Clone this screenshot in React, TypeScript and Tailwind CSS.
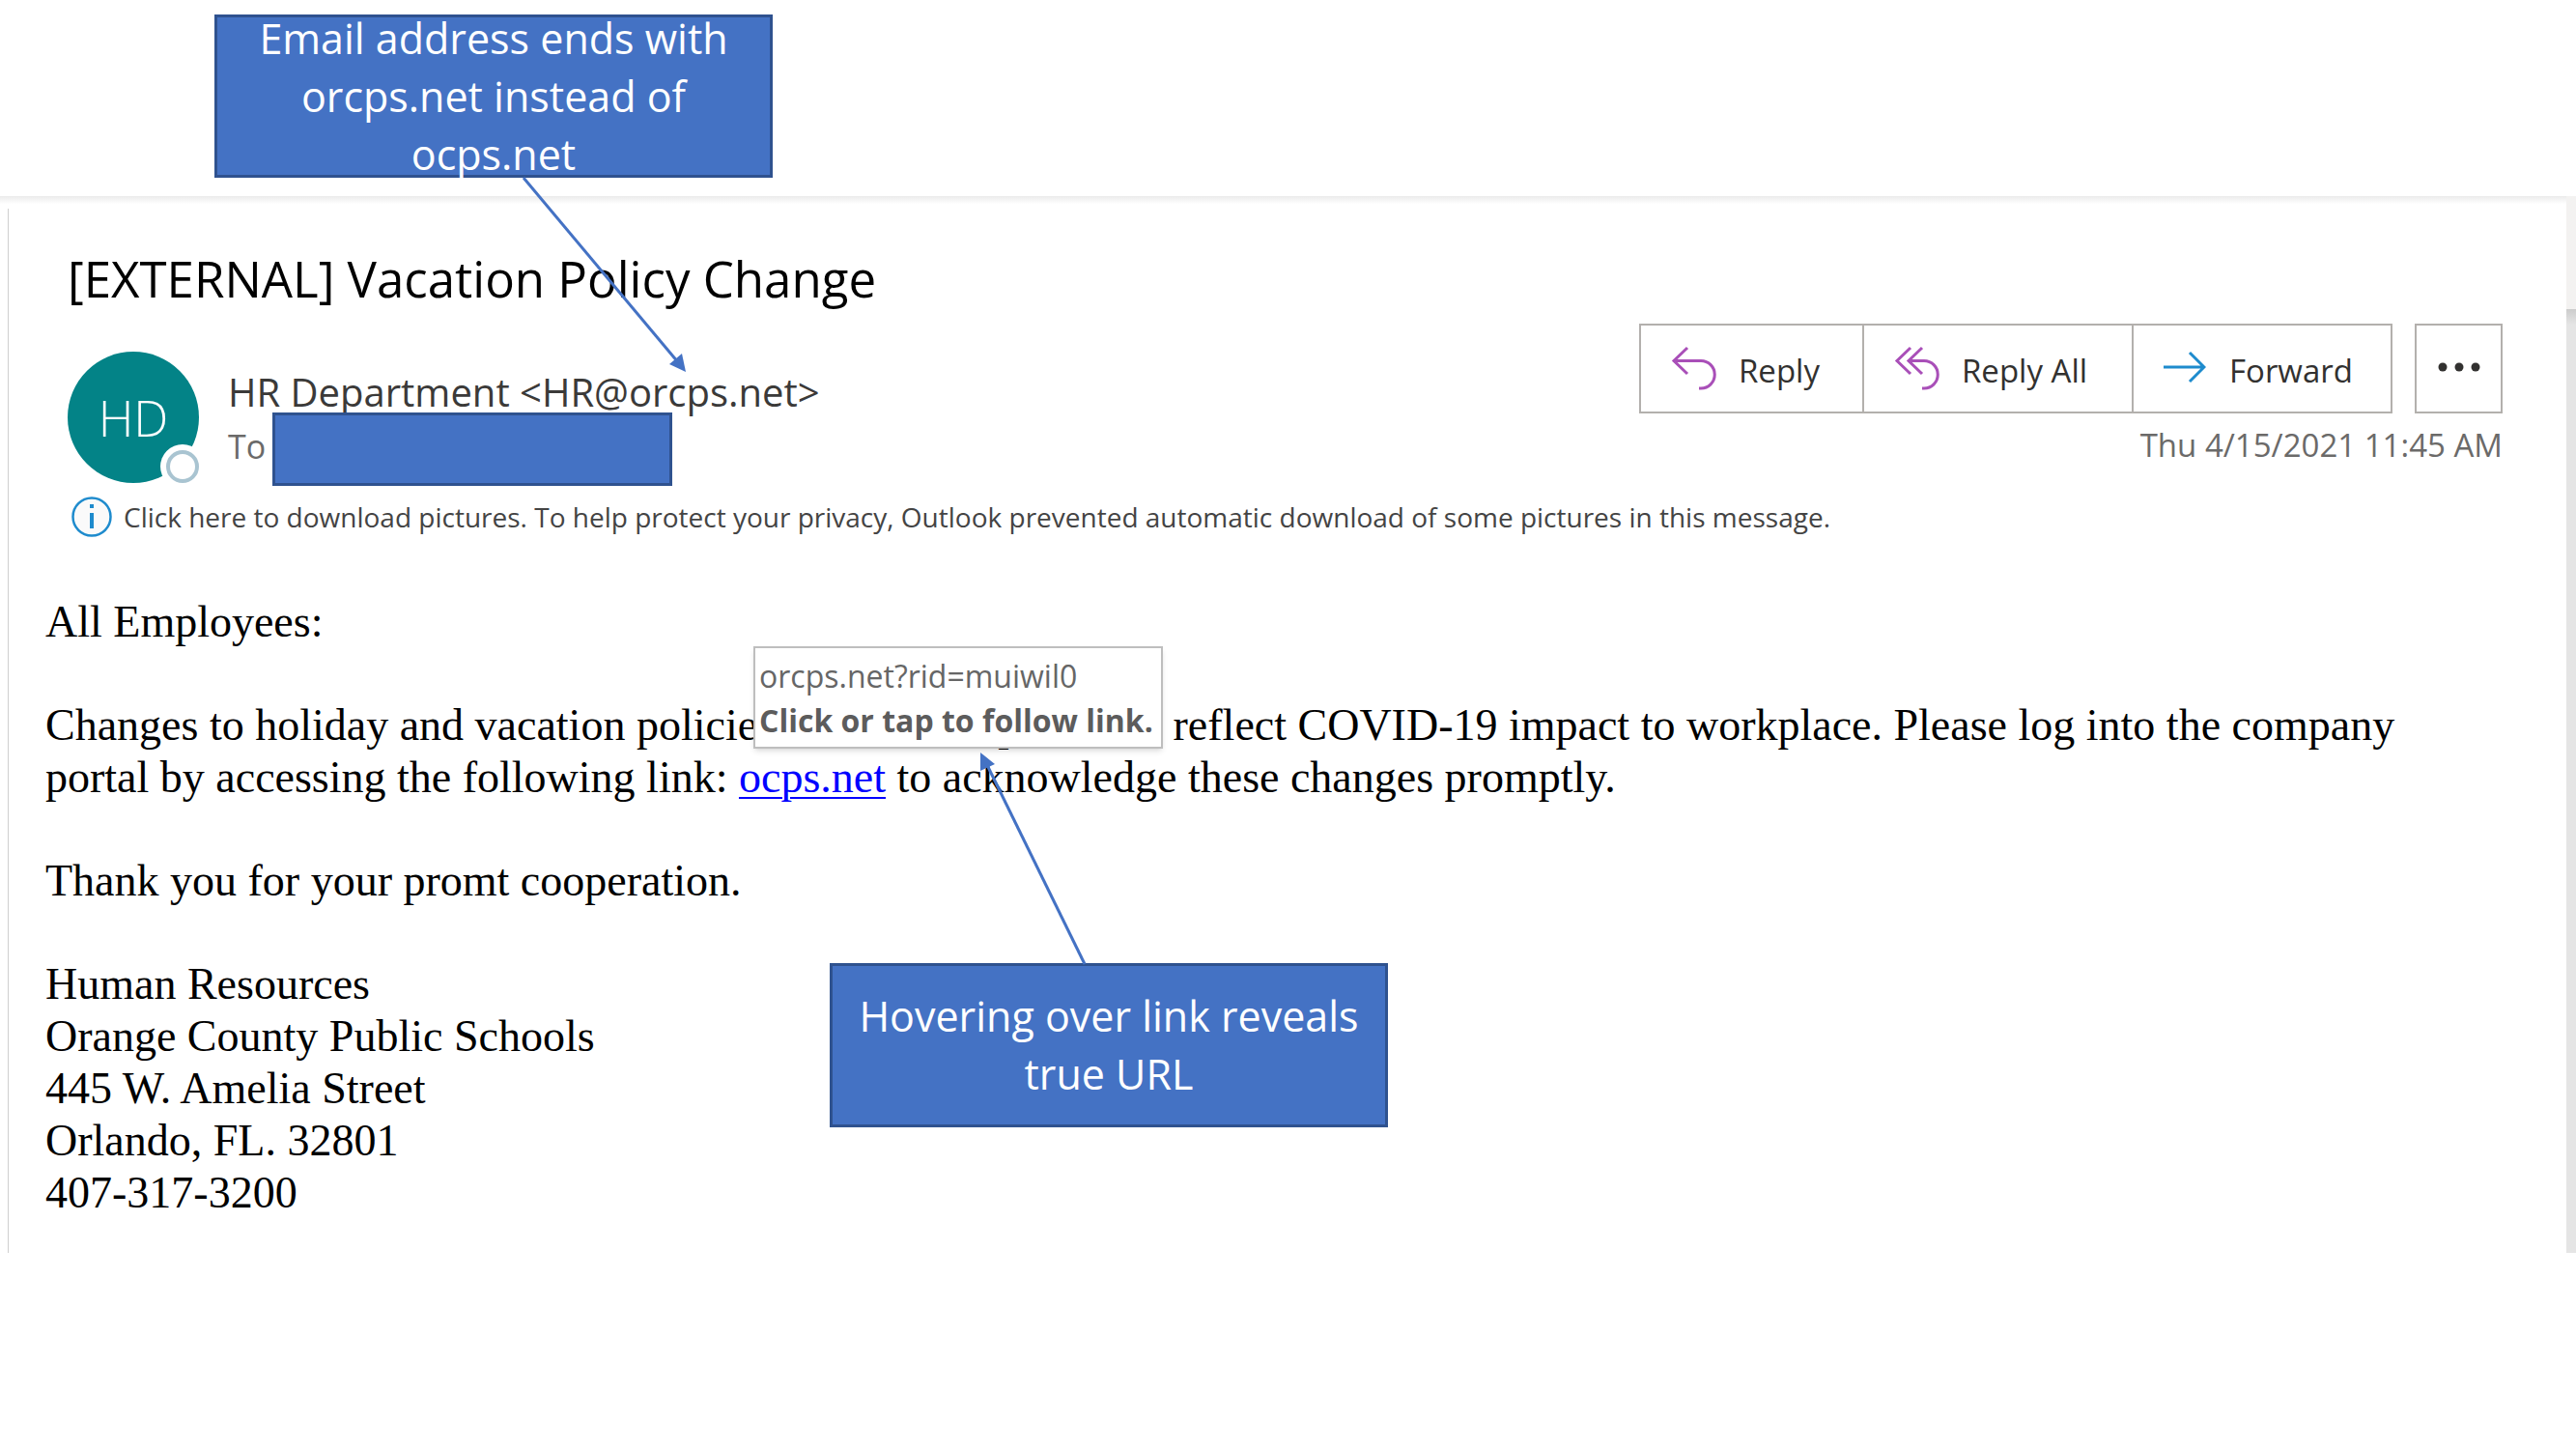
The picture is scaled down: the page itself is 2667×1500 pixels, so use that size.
const callout = "absolute flex items-center justify-center text-center border-[3px] border-[#2f528f] bg-[#4472c4] text-white font-['Open_Sans',sans-serif] text-[43px] leading-[60px]";

function ReplyIcon({ all = false }: { all?: boolean }) {
  return (
    <svg width="48" height="48" viewBox="0 0 48 48" fill="none" stroke="#a94fb8" strokeWidth="3" className="shrink-0">
      <path d="M17 2 3 15.500 17 29" />
      {all && <path d="M29 2 15 15.500 29 29" />}
      <path d={all ? "M15 15.500H31A14.250 14.250 0 0 1 31 44H29" : "M3 15.500H31A14.250 14.250 0 0 1 31 44H29"} />
    </svg>
  );
}

export default function App() {
  return (
    <div className="relative min-h-screen overflow-hidden bg-white text-black">
      <header className="h-[203px]" />
      <div className="flex">
        <main className="min-w-0 grow font-['Open_Sans',sans-serif]">
          <div className="h-2 bg-linear-to-b from-[#ebebeb] to-white" />
          <div className="mt-[5px] ml-2 border-l border-[#d0d0d0] pb-[35px]">
            <section className="pr-[66px] pl-[61px]">
              <h1 className="pt-[38px] text-[51px] leading-[69px]">[EXTERNAL] Vacation Policy Change</h1>
              <div className="flex justify-between">
                <div className="flex pt-[41px]">
                  <div className="relative flex size-[136px] items-center justify-center rounded-full bg-[#038387] text-[51px] font-light text-white">
                    HD
                    <span className="absolute -right-[6px] -bottom-[6px] size-[46px] rounded-full bg-white p-[6px]">
                      <span className="block size-full rounded-full border-4 border-[#a9c4d1]" />
                    </span>
                  </div>
                  <div className="ml-[30px] pt-[14px]">
                    <p className="text-[40px] leading-[56px] text-[#3b3a39]">HR Department &lt;HR@orcps.net&gt;</p>
                    <p className="text-[34px] leading-[56px] text-[#6b6a69]">To</p>
                  </div>
                </div>
                <div className="flex flex-col items-end pt-[12px]">
                  <div className="flex h-[93px] gap-[23px] text-[33px] text-[#323130]">
                    <div className="flex divide-x-2 divide-[#b3b0ad] border-2 border-[#b3b0ad]">
                      <button className="flex w-[231px] items-center gap-[22px] pl-[31px]"><ReplyIcon /><span className="pt-1">Reply</span></button>
                      <button className="flex w-[279px] items-center gap-[22px] pl-[31px]"><ReplyIcon all /><span className="pt-1">Reply All</span></button>
                      <button className="flex w-[266px] items-center gap-6 pl-[31px]">
                        <svg width="44" height="36" viewBox="0 0 44 36" fill="none" stroke="#1e8bcd" strokeWidth="3" className="mb-1 shrink-0"><path d="M0 18H42M27 3 42 18 27 33" /></svg>
                        <span className="pt-1">Forward</span>
                      </button>
                    </div>
                    <button aria-label="More actions" className="flex w-[91px] items-center justify-center border-2 border-[#b3b0ad]">
                      <svg width="44" height="10" viewBox="0 0 44 10" fill="#323130" className="mb-1"><circle cx="5" cy="5" r="4.500" /><circle cx="22" cy="5" r="4.500" /><circle cx="39" cy="5" r="4.500" /></svg>
                    </button>
                  </div>
                  <time className="mt-2 text-[33px] leading-[50px] text-[#6b6a69]">Thu 4/15/2021 11:45 AM</time>
                </div>
              </div>
              <button className="mt-3 flex items-center gap-3 text-left text-[28px] leading-[46px] text-[#444]">
                <svg width="42" height="42" viewBox="0 0 42 42" className="ml-1 shrink-0"><circle cx="21" cy="21" r="19.500" fill="#fafafa" stroke="#1e8bcd" strokeWidth="2.500" /><path d="M21 17V33M21 8V12" stroke="#1e8bcd" strokeWidth="4" /></svg>
                Click here to download pictures. To help protect your privacy, Outlook prevented automatic download of some pictures in this message.
              </button>
            </section>
            <article className="mt-[59px] pr-[130px] pl-[38px] font-['Liberation_Serif',serif] text-[46px] leading-[54px]">
              <p>All Employees:</p>
              <p className="mt-[53px]">
                Changes to holiday and vacation policies have been updated to reflect COVID-19 impact to workplace. Please log into the company portal by accessing the following link:{" "}
                <a href="#link" className="text-[#0000ff] underline decoration-2 underline-offset-[5px]">ocps.net</a> to acknowledge these changes promptly.
              </p>
              <p className="mt-[53px]">Thank you for your promt cooperation.</p>
              <address className="mt-[53px] not-italic">
                Human Resources<br />Orange County Public Schools<br />445 W. Amelia Street<br />Orlando, FL. 32801<br />407-317-3200
              </address>
            </article>
          </div>
        </main>
        <aside className="flex w-[10px] shrink-0 flex-col bg-[#e5e5e5]">
          <div className="h-[117px] bg-[#f3f2f1]" />
          <div className="h-4 bg-linear-to-b from-[#cccccc] to-[#e5e5e5]" />
        </aside>
      </div>

      <div role="tooltip" className="absolute top-[669px] left-[780px] border-2 border-[#bebebe] bg-white pt-[6px] pr-2 pb-1 pl-1 font-['Open_Sans',sans-serif] text-[32px] leading-[46px] whitespace-nowrap text-[#666] shadow-md">
        <p>orcps.net?rid=muiwil0</p>
        <p className="font-bold text-[#5c5c5c]">Click or tap to follow link.</p>
      </div>
      <div className="absolute top-[427px] left-[282px] h-[76px] w-[414px] border-[3px] border-[#2f528f] bg-[#4472c4]" />
      <div className={callout + " top-[15px] left-[222px] h-[169px] w-[578px] px-8"}>Email address ends with orcps.net instead of ocps.net</div>
      <div className={callout + " top-[997px] left-[859px] h-[170px] w-[578px] px-5"}>Hovering over link reveals true URL</div>
      <svg className="pointer-events-none absolute top-0 left-0" width="1200" height="1000" viewBox="0 0 1200 1000" fill="#4472c4" stroke="none">
        <path d="M542 184 702 375" stroke="#4472c4" strokeWidth="3" />
        <path d="M710 385 693 377 706 366Z" />
        <path d="M1123 998 1022 792" stroke="#4472c4" strokeWidth="3" />
        <path d="M1015 779 1030 791 1015 798Z" />
      </svg>
    </div>
  );
}
